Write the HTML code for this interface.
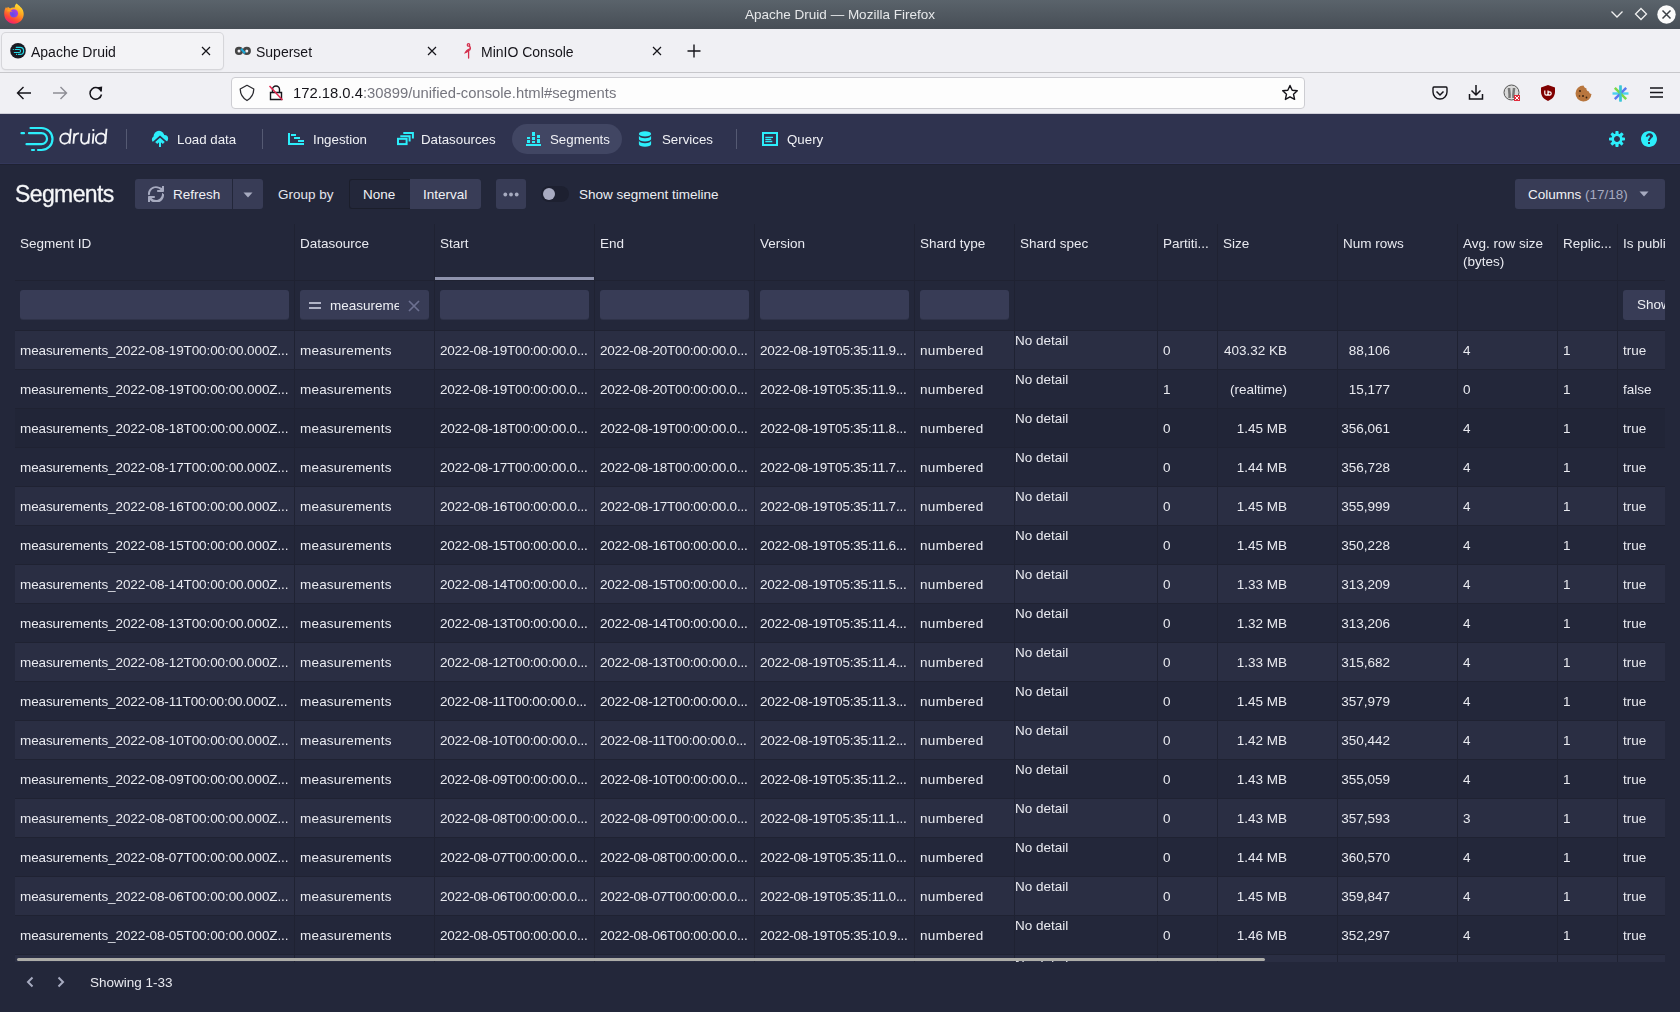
<!DOCTYPE html><html><head><meta charset="utf-8"><title>Apache Druid</title><style>
*{box-sizing:border-box;margin:0;padding:0}
html,body{width:1680px;height:1012px;overflow:hidden;background:#23273a;font-family:"Liberation Sans",sans-serif;-webkit-font-smoothing:antialiased}
.tbl,#dhdr,#tabbar,#navbar,#titlebar{will-change:transform}
.abs{position:absolute}
/* title bar */
#titlebar{position:absolute;left:0;top:0;width:1680px;height:29px;background:linear-gradient(#5a636b,#474e56);}
#titlebar .ttl{position:absolute;left:0;width:1680px;top:7px;text-align:center;color:#e6e8ea;font-size:13.5px;line-height:16px}
#tabbar{position:absolute;left:0;top:29px;width:1680px;height:44px;background:#f0f0f4;border-bottom:1px solid #c7c7cb}
.tab{position:absolute;top:4px;height:36px;width:221px;}
.tab.sel{background:#f3f3f6;border-radius:4px;box-shadow:0 0 0 1px #d6d6da,0 1px 2px rgba(0,0,0,.15)}
.tab .tt{position:absolute;left:29px;top:11px;font-size:14px;color:#15141a;line-height:17px}
.tab .tx{position:absolute;left:199px;top:13px}
.tab .fi{position:absolute;left:8px;top:11px}
#navbar{position:absolute;left:0;top:73px;width:1680px;height:41px;background:#f0f0f4;border-bottom:1px solid #cfcfd8}
#urlbar{position:absolute;left:231px;top:4px;width:1074px;height:32px;background:#fdfdfd;border:1px solid #cdcdd2;border-radius:4px}
#urlbar .u{position:absolute;left:61px;top:6px;font-size:14.8px;color:#15141a;line-height:18px;white-space:pre}
#urlbar .u i{font-style:normal;color:#75757e}
.ico{position:absolute}
/* druid header */
#dhdr{position:absolute;left:0;top:114px;width:1680px;height:50px;background:#2f334f;box-shadow:inset 0 -1px 0 #33375a,0 1px 0 #1f2233}
.nav{position:absolute;top:0;height:50px}
.navt{position:absolute;top:18px;font-size:13.3px;color:#f0f1f5;line-height:16px;white-space:pre}
.sep{position:absolute;top:15px;width:1px;height:20px;background:#555a73}
.pill{position:absolute;left:512px;top:10px;width:110px;height:30px;border-radius:15px;background:#414663}
/* toolbar */
.h1{position:absolute;left:15px;top:179px;font-size:23px;letter-spacing:-0.6px;-webkit-text-stroke:0.3px #f5f6f8;color:#f5f6f8;line-height:30px;white-space:pre;will-change:transform}
.btn{position:absolute;top:179px;height:30px;background:#383c56;border-radius:3px}
.btnt{position:absolute;top:8px;font-size:13.5px;color:#f0f1f5;line-height:16px;white-space:pre}
/* table */
.tbl{position:absolute;left:15px;top:224px;width:1650px;height:738px;overflow:hidden}
.hrow{position:absolute;left:0;top:0;width:1650px;height:57px;border-bottom:1px solid #1f2232}
.th{position:absolute;top:0;height:56px;border-right:1px solid #1f2232}
.th span{position:absolute;left:5px;top:11px;font-size:13.5px;color:#e9eaf0;line-height:18px;white-space:nowrap}
.th.sorted{box-shadow:inset 0 -3px 0 #8f93ad}
.frow{position:absolute;left:0;top:57px;width:1650px;height:50px;border-bottom:1px solid #1f2232}
.fc{position:absolute;top:0;height:50px;border-right:1px solid #1f2232}
.inp{position:absolute;left:5px;right:5px;top:9px;height:30px;background:#383c56;border-radius:3px;box-shadow:0 0 0 0 transparent, inset 0 -1px 0 rgba(0,0,0,.15)}
.dsf .eq{position:absolute;left:9px;top:12px;width:12px;height:7px;border-top:2px solid #b0b3c6;border-bottom:2px solid #b0b3c6}
.dsf .fv{position:absolute;left:30px;top:8px;width:69px;overflow:hidden;font-size:13.5px;color:#eceef3;line-height:16px;white-space:pre}
.dsf .fx{position:absolute;left:108px;top:8px}
.showbtn{position:absolute;left:5px;top:9px;width:60px;height:30px;background:#383c56;border-radius:3px;color:#eceef3;font-size:13.5px;line-height:30px;padding-left:14px}
.body{position:absolute;left:0;top:107px;width:1650px}
.row{position:absolute;left:0;width:1650px;height:39px;border-bottom:1px solid #1f2232}
.row.odd{background:#2a2e43}
.row.dark{background:#212537}
.td{position:absolute;top:0;height:39px;border-right:1px solid #1f2232;overflow:hidden}
.td span{position:absolute;left:5px;top:12px;font-size:13.5px;color:#e9eaf0;line-height:16px;white-space:nowrap}
.td.spec span{left:0px;top:2px}
.td.sz span{left:auto;right:50px}
.td.nr span{left:auto;right:67px}
.hscroll{position:absolute;left:2px;top:734px;width:1248px;height:3px;border-radius:1.5px;background:#adada8}
.foot{position:absolute;will-change:transform;top:975px;font-size:13.5px;color:#e9eaf0;line-height:16px}
.td.dt span{letter-spacing:-0.2px}
.td.sid span{letter-spacing:-0.1px}
.td.dsn span{letter-spacing:0.2px}
.td.shd span{letter-spacing:0.35px}

</style></head><body>
<div id="titlebar">
<svg class="ico" style="left:0;top:0" width="30" height="29" viewBox="0 0 30 29">
<defs><linearGradient id="ffg" x1="0.8" y1="0" x2="0.3" y2="1"><stop offset="0" stop-color="#ffe83a"/><stop offset="0.4" stop-color="#ffa51f"/><stop offset="0.75" stop-color="#ff4a35"/><stop offset="1" stop-color="#f0197a"/></linearGradient>
<radialGradient id="ffp" cx="0.35" cy="0.65" r="0.7"><stop offset="0" stop-color="#5b4fe8"/><stop offset="1" stop-color="#b03ae0"/></radialGradient></defs>
<path d="M16.4 3.6C15.2 5 14.6 6.4 14.8 7.6C13 7.2 11.2 7.6 10 8.4C9.4 7.6 8.6 7.2 7.6 7L7.2 8.6C6.6 8.2 6.2 7.6 6 7C4.8 8.8 4.2 11.2 4.2 13.8C4.2 19.4 8.6 23.8 14 23.8C19.4 23.8 23.7 19.4 23.7 14C23.7 9.8 21.2 7.6 20.4 7C19.6 5.8 17.8 4.8 16.4 3.6Z" fill="url(#ffg)"/>
<circle cx="13.9" cy="13.4" r="4.2" fill="url(#ffp)"/>
<path d="M6.8 11.6C8.2 11 10.8 11.2 12.6 11.8C11 10.4 9.4 9.8 7.6 10.2Z" fill="#ffa31f"/>
</svg>
<div class="ttl">Apache Druid — Mozilla Firefox</div>
<svg class="ico" style="left:1610px;top:9px" width="14" height="10" viewBox="0 0 14 10"><path d="M1.5 2.5L7 8L12.5 2.5" fill="none" stroke="#f0f0f0" stroke-width="1.3"/></svg>
<svg class="ico" style="left:1634px;top:7px" width="14" height="14" viewBox="0 0 14 14"><path d="M7 1.5L12.5 7L7 12.5L1.5 7Z" fill="none" stroke="#f0f0f0" stroke-width="1.3"/></svg>
<svg class="ico" style="left:1656px;top:4px" width="21" height="21" viewBox="0 0 21 21"><circle cx="10.5" cy="10.5" r="9.2" fill="#fbfbfb"/><path d="M6.5 6.5L14.5 14.5M14.5 6.5L6.5 14.5" stroke="#3a3f45" stroke-width="1.5"/></svg>
</div>
<div id="tabbar">
<div class="tab sel" style="left:2px">
<svg class="fi" style="left:0;top:0" width="30" height="36" viewBox="2 33 30 36"><circle cx="18" cy="50.8" r="7.8" fill="#1b1a22"/><g fill="none" stroke="#27d8e6" stroke-width="1.15" stroke-linecap="round"><path d="M16.3 47.4H20.1A3.5 3.5 0 0 1 20.1 54.4H18.4M16.5 54.4H16.6"/><path d="M15.3 49.5H19.1A1.5 1.5 0 0 1 19.1 52.5H14.3M13.3 49.5H13.4"/></g></svg>
<div class="tt">Apache Druid</div>
<svg class="tx" width="10" height="10" viewBox="0 0 10 10"><path d="M1 1L9 9M9 1L1 9" stroke="#15141a" stroke-width="1.2"/></svg>
</div>
<div class="tab" style="left:225px">
<svg class="fi" style="left:0;top:0" width="30" height="36" viewBox="225 33 30 36"><circle cx="239" cy="50.9" r="2.8" fill="none" stroke="#454545" stroke-width="2.6"/><circle cx="246.8" cy="50.9" r="2.8" fill="none" stroke="#454545" stroke-width="2.6"/><path d="M241 48.6L245 53.2" stroke="#1aa6d6" stroke-width="2.2"/></svg>
<div class="tt" style="left:31px">Superset</div>
<svg class="tx" style="left:202px" width="10" height="10" viewBox="0 0 10 10"><path d="M1 1L9 9M9 1L1 9" stroke="#15141a" stroke-width="1.2"/></svg>
</div>
<div class="tab" style="left:450px">
<svg class="fi" style="left:0;top:0" width="30" height="36" viewBox="450 33 30 36"><g fill="none" stroke="#d3304d" stroke-width="1.3" stroke-linecap="round"><circle cx="468.5" cy="44.9" r="1.2"/><path d="M469.4 46Q471.2 48 469.8 50M468.6 50.5V58"/></g><path d="M464 53.8Q465.5 49.6 470 48.2Q470.6 51.5 464 53.8Z" fill="#d3304d"/></svg>
<div class="tt" style="left:31px">MinIO Console</div>
<svg class="tx" style="left:202px" width="10" height="10" viewBox="0 0 10 10"><path d="M1 1L9 9M9 1L1 9" stroke="#15141a" stroke-width="1.2"/></svg>
</div>
<svg class="ico" style="left:687px;top:15px" width="14" height="14" viewBox="0 0 14 14"><path d="M7 0.5V13.5M0.5 7H13.5" stroke="#15141a" stroke-width="1.4"/></svg>
</div>
<div id="navbar">
<svg class="ico" style="left:16px;top:13px" width="16" height="14" viewBox="0 0 16 14"><path d="M15 7H1.5M7.5 1L1.5 7L7.5 13" fill="none" stroke="#15141a" stroke-width="1.4"/></svg>
<svg class="ico" style="left:52px;top:13px" width="16" height="14" viewBox="0 0 16 14"><path d="M1 7H14.5M8.5 1L14.5 7L8.5 13" fill="none" stroke="#8d8d94" stroke-width="1.4"/></svg>
<svg class="ico" style="left:88px;top:12px" width="16" height="16" viewBox="0 0 16 16"><path d="M13.3 6.5A5.8 5.8 0 1 0 13.5 9.5" fill="none" stroke="#15141a" stroke-width="1.5"/><path d="M9.5 2.2L14.2 1.6L13.8 6.4Z" fill="#15141a"/></svg>
<div id="urlbar">
<svg class="ico" style="left:5px;top:5px" width="20" height="20" viewBox="0 0 20 20"><path d="M10 2.3L3.2 6C3.4 11.5 5.5 15 10 17.5C14.5 15 16.6 11.5 16.8 6Z" fill="none" stroke="#2b2b30" stroke-width="1.3" stroke-linejoin="round"/></svg>
<svg class="ico" style="left:36px;top:6px" width="16" height="17" viewBox="0 0 16 17"><path d="M4.5 8V5.5A3.5 3.5 0 0 1 11.5 5.5V8M2.5 8.5H13.5V15.5H2.5Z" fill="none" stroke="#15141a" stroke-width="1.4"/><path d="M1.5 2L14.5 16" stroke="#e22850" stroke-width="1.5"/></svg>
<div class="u">172.18.0.4<i>:30899/unified-console.html#segments</i></div>
<svg class="ico" style="left:1049px;top:6px" width="18" height="18" viewBox="0 0 18 18"><path d="M9 1.5L11.2 6.3L16.3 6.8L12.5 10.2L13.6 15.4L9 12.8L4.4 15.4L5.5 10.2L1.7 6.8L6.8 6.3Z" fill="none" stroke="#15141a" stroke-width="1.4" stroke-linejoin="round"/></svg>
</div>
<svg class="ico" style="left:1432px;top:13px" width="16" height="14" viewBox="0 0 16 14"><path d="M2 1H14A1.2 1.2 0 0 1 15 2.2V6A7 7 0 0 1 1 6V2.2A1.2 1.2 0 0 1 2 1Z" fill="none" stroke="#15141a" stroke-width="1.4"/><path d="M4.5 5.5L8 9L11.5 5.5" fill="none" stroke="#15141a" stroke-width="1.5"/></svg>
<svg class="ico" style="left:1468px;top:11px" width="16" height="17" viewBox="0 0 16 17"><path d="M8 1V11M3.5 6.5L8 11L12.5 6.5M1.5 10V15H14.5V10" fill="none" stroke="#15141a" stroke-width="1.5"/></svg>
<svg class="ico" style="left:1503px;top:11px" width="18" height="18" viewBox="0 0 18 18"><circle cx="8.5" cy="8.5" r="7.5" fill="#d8d8d8" stroke="#555" stroke-width="1"/><path d="M6 4C6 7 7 9 6.5 14M11 4C11 7 10 9 10.5 14" stroke="#777" stroke-width="2.5"/><rect x="11" y="11" width="6" height="6" fill="#e02a3a"/><path d="M12 12L16 16M16 12L12 16" stroke="#fff" stroke-width="1"/></svg>
<svg class="ico" style="left:1540px;top:11px" width="16" height="18" viewBox="0 0 16 18"><path d="M8 1L15 3.5V8C15 12.5 11.5 15.5 8 17C4.5 15.5 1 12.5 1 8V3.5Z" fill="#800000"/><path d="M4.8 6.5V9.5A1.6 1.6 0 0 0 8 9.5V6.5M8 9.5A1.6 1.6 0 0 0 11.2 9.5A1.6 1.6 0 0 0 8 9.5" fill="none" stroke="#fff" stroke-width="1.2"/></svg>
<svg class="ico" style="left:1575px;top:12px" width="17" height="17" viewBox="0 0 17 17"><path d="M8.5 0.5A8 8 0 1 0 16.5 9C15 9 14 8 14 6.5C12.5 6.5 11 5 11.5 3.5C10 3 9 2 8.5 0.5Z" fill="#b8763e"/><circle cx="5" cy="6" r="1" fill="#3b2412"/><circle cx="8" cy="11" r="1" fill="#3b2412"/><circle cx="11.5" cy="12.5" r="0.9" fill="#3b2412"/><circle cx="4.5" cy="11" r="0.8" fill="#3b2412"/></svg>
<svg class="ico" style="left:1612px;top:12px" width="17" height="17" viewBox="0 0 17 17"><path d="M8.5 0.5V16.5" stroke="#33c8e8" stroke-width="2.4"/><path d="M0.5 8.5H16.5" stroke="#4ad0f0" stroke-width="2.4"/><path d="M14.2 2.8L2.8 14.2" stroke="#5a78f0" stroke-width="2.4"/><path d="M2.8 2.8L14.2 14.2" stroke="#7ad84a" stroke-width="2.4"/><path d="M8.5 0.5V16.5" stroke="#3cc6d2" stroke-width="2.2"/></svg>
<svg class="ico" style="left:1650px;top:14px" width="13" height="11" viewBox="0 0 13 11"><path d="M0 1H13M0 5.5H13M0 10H13" stroke="#15141a" stroke-width="1.4"/></svg>
</div>

<div id="dhdr">
<svg class="ico" style="left:14px;top:6px" width="100" height="38" viewBox="14 120 100 38">
<g fill="none" stroke="#2ceefb" stroke-width="2.2" stroke-linecap="round">
<path d="M30.5 128H41.5A11 11 0 0 1 41.5 150H38"/><path d="M32 150H34"/>
<path d="M29 133.2H41.5A5.5 5.5 0 0 1 41.5 144.2H26.5"/><path d="M21.5 133.2H24"/>
</g>
<g fill="none" stroke="#f2f3f6" stroke-width="1.85" transform="translate(0,143.8) skewX(-5) translate(0,-143.8)">
<ellipse cx="64.6" cy="138.6" rx="4.8" ry="5.1"/><path d="M69.5 128.8V143.8"/>
<path d="M73.4 133.3V143.8M73.4 137.8Q74 133.4 78.2 133.4"/>
<path d="M80.7 133.3V139.3A3.85 4.4 0 0 0 88.4 139.3V133.3M88.4 139V143.8"/>
<path d="M92.7 133.3V143.8"/>
<ellipse cx="100.2" cy="138.6" rx="4.8" ry="5.1"/><path d="M105.2 128.8V143.8"/>
</g>
<circle cx="93.3" cy="130.1" r="1.15" fill="#f2f3f6"/>
</svg>
<div class="sep" style="left:126px"></div>
<svg class="ico" style="left:148px;top:14px" width="24" height="22" viewBox="148 128 24 22"><defs><clipPath id="cuc"><rect x="148" y="128" width="24" height="14.3"/></clipPath></defs><g clip-path="url(#cuc)" fill="#2ceefb"><circle cx="159" cy="136.2" r="5.4"/><circle cx="164.6" cy="138.6" r="3.5"/><circle cx="155" cy="139.6" r="3.1"/><rect x="155" y="137" width="10" height="6"/></g><path d="M151.5 144.2L160 136.6L168.5 144.2" fill="none" stroke="#2f334f" stroke-width="1.8"/><path d="M155.8 142.6L160 138.4L164.2 142.6L162.8 144L161 142.3V147H159V142.3L157.2 144Z" fill="#2ceefb"/></svg>
<div class="navt" style="left:177px">Load data</div>
<div class="sep" style="left:262px"></div>
<svg class="ico" style="left:282px;top:14px" width="28" height="22" viewBox="282 128 28 22" fill="#2ceefb"><rect x="288" y="133" width="2" height="12"/><rect x="288" y="143" width="16" height="2"/><rect x="291" y="134" width="5" height="2"/><rect x="294" y="137" width="6" height="2"/><rect x="298" y="140" width="6" height="2"/></svg>
<div class="navt" style="left:313px">Ingestion</div>
<svg class="ico" style="left:390px;top:12px" width="30" height="26" viewBox="390 126 30 26"><g fill="none" stroke="#2ceefb" stroke-width="2"><rect x="398" y="138.8" width="8.6" height="5.3"/><path d="M400.3 136.2H409.6V141.6M403.3 133.1H412.9V138.6"/></g></svg>
<div class="navt" style="left:421px">Datasources</div>
<div class="pill"></div>
<svg class="ico" style="left:522px;top:14px" width="24" height="22" viewBox="522 128 24 22" fill="#2ceefb"><rect x="526" y="144" width="15" height="2"/><rect x="527" y="137" width="3" height="2"/><rect x="527" y="140" width="3" height="3"/><rect x="532" y="132" width="3" height="4"/><rect x="532" y="137" width="3" height="3"/><rect x="532" y="141" width="3" height="2"/><rect x="537" y="135" width="3" height="3"/><rect x="537" y="139" width="3" height="4"/></svg>
<div class="navt" style="left:550px">Segments</div>
<svg class="ico" style="left:638px;top:17px" width="14" height="16" viewBox="0 0 14 16"><ellipse cx="7" cy="2.9" rx="6.1" ry="2.6" fill="#2ceefb"/><path d="M0.9 4.6A6.1 2.6 0 0 0 13.1 4.6V8A6.1 2.6 0 0 1 0.9 8Z" fill="#2ceefb"/><path d="M0.9 9.6A6.1 2.6 0 0 0 13.1 9.6V13.2A6.1 2.6 0 0 1 0.9 13.2Z" fill="#2ceefb"/></svg>
<div class="navt" style="left:662px">Services</div>
<div class="sep" style="left:736px"></div>
<svg class="ico" style="left:762px;top:18px" width="16" height="14" viewBox="0 0 16 14"><rect x="1" y="1" width="14" height="12" fill="none" stroke="#2ceefb" stroke-width="2"/><path d="M3.3 5.3H11M3.3 7.4H9.3M3.3 9.5H10.3" stroke="#2ceefb" stroke-width="1.3"/></svg>
<div class="navt" style="left:787px">Query</div>
<svg class="ico" style="left:1609px;top:17px" width="16" height="16" viewBox="0 0 16 16"><path d="M15.19 6.39h-1.85c-.11-.37-.27-.71-.45-1.04l1.36-1.36c.31-.31.31-.82 0-1.13l-1.13-1.13a.803.803 0 00-1.13 0l-1.36 1.36c-.33-.17-.67-.33-1.04-.44V.79c0-.44-.36-.8-.8-.8h-1.6c-.44 0-.8.36-.8.8v1.86c-.39.12-.75.28-1.1.47l-1.3-1.3c-.3-.3-.79-.3-1.09 0L1.82 2.91c-.3.3-.3.79 0 1.09l1.3 1.3c-.2.34-.36.7-.48 1.09H.79c-.44 0-.8.36-.8.8v1.6c0 .44.36.8.8.8h1.85c.11.37.27.71.45 1.04l-1.36 1.36c-.31.31-.31.82 0 1.13l1.13 1.13c.31.31.82.31 1.13 0l1.36-1.36c.33.18.67.33 1.04.44v1.86c0 .44.36.8.8.8h1.6c.44 0 .8-.36.8-.8v-1.86c.39-.12.75-.28 1.1-.47l1.3 1.3c.3.3.79.3 1.09 0l1.09-1.09c.3-.3.3-.79 0-1.09l-1.3-1.3c.19-.35.36-.71.48-1.1h1.85c.44 0 .8-.36.8-.8v-1.6a.816.816 0 00-.81-.79zm-7.2 4.6c-1.66 0-3-1.34-3-3s1.34-3 3-3 3 1.34 3 3-1.34 3-3 3z" fill="#2ceefb"/></svg>
<svg class="ico" style="left:1641px;top:17px" width="16" height="16" viewBox="0 0 16 16"><path d="M8 0C3.58 0 0 3.58 0 8s3.58 8 8 8 8-3.58 8-8-3.58-8-8-8zm1 13H7v-2h2v2zm1.93-6.52c-.14.32-.35.64-.62.97L9.25 8.83c-.12.15-.24.29-.28.42-.04.13-.09.3-.09.52V10H7.12V8.88s.05-.51.21-.71L8.4 6.73c.22-.26.35-.49.44-.68.09-.19.12-.38.12-.58 0-.3-.1-.55-.28-.75-.18-.19-.44-.28-.76-.28-.33 0-.59.1-.78.29-.19.19-.33.46-.4.8-.03.1-.09.14-.2.14H4.97c-.11 0-.13-.08-.12-.18.08-.53.23-.99.45-1.38s.5-.72.84-.98c.34-.26.72-.45 1.15-.58.43-.13.89-.19 1.38-.19.5 0 .95.07 1.36.2.41.14.76.33 1.04.59.29.25.51.56.67.92.16.36.23.76.23 1.21 0 .35-.07.65-.18.97z" fill="#2ceefb"/></svg>
</div>
<div class="h1">Segments</div>
<div class="btn" style="left:135px;width:128px">
<svg class="ico" style="left:13px;top:7px" width="16" height="16" viewBox="0 0 16 16"><path d="M14.99 6.99c-.55 0-1 .45-1 1 0 3.31-2.69 6-6 6-1.77 0-3.36-.78-4.46-2h2.46c.55 0 1-.45 1-1s-.45-1-1-1h-4.98c-.55 0-1 .45-1 1v5c0 .55.45 1 1 1s1-.45 1-1v-2.1c1.46 1.73 3.63 2.85 6.07 2.85 4.4 0 7.97-3.56 7.97-7.95-.01-.55-.46-1-1.01-1zM1.01 8.99c.55 0 1-.45 1-1 0-3.31 2.69-6 6-6 1.77 0 3.36.78 4.46 2h-2.46c-.55 0-1 .45-1 1s.45 1 1 1h4.98c.55 0 1-.45 1-1v-5c0-.55-.45-1-1-1s-1 .45-1 1v2.1C12.53 1.35 10.36.23 7.93.23 3.52.23-.05 3.79-.05 8.18c.01.55.46 1 1.01 1z" fill="#a7abc0"/></svg>
<div class="btnt" style="left:38px">Refresh</div>
<div style="position:absolute;left:97px;top:0;width:1px;height:30px;background:#23273a"></div>
<svg class="ico" style="left:108px;top:13px" width="10" height="6" viewBox="0 0 10 6"><path d="M0.5 0.5H9.5L5 5.5Z" fill="#a7abc0"/></svg>
</div>
<div class="btnt" style="left:278px;top:187px;color:#e4e6ee">Group by</div>
<div class="btn" style="left:349px;width:132px;background:#23273a;box-shadow:inset 0 0 0 1px #1b1e2b">
<div style="position:absolute;left:61px;top:0;width:71px;height:30px;background:#393d57;border-radius:0 3px 3px 0"></div>
<div class="btnt" style="left:14px">None</div>
<div class="btnt" style="left:74px">Interval</div>
</div>
<div class="btn" style="left:496px;width:30px">
<svg class="ico" style="left:7px;top:13px" width="16" height="5" viewBox="0 0 16 5"><circle cx="2.3" cy="2.5" r="1.9" fill="#a7abc0"/><circle cx="8" cy="2.5" r="1.9" fill="#a7abc0"/><circle cx="13.7" cy="2.5" r="1.9" fill="#a7abc0"/></svg>
</div>
<div class="abs" style="left:541px;top:186px;width:28px;height:16px;border-radius:8px;background:#1d2030"></div>
<div class="abs" style="left:543px;top:188px;width:12px;height:12px;border-radius:6px;background:#a8abc1"></div>
<div class="btnt" style="left:579px;top:187px;color:#eceef3">Show segment timeline</div>
<div class="btn" style="left:1515px;width:150px">
<div class="btnt" style="left:13px">Columns <span style="color:#a7abc0">(17/18)</span></div>
<svg class="ico" style="left:124px;top:12px" width="10" height="6" viewBox="0 0 10 6"><path d="M0.5 0.5H9.5L5 5.5Z" fill="#a7abc0"/></svg>
</div>

<div class="tbl"><div class="hrow"><div class="th" style="left:0px;width:280px"><span>Segment ID</span></div><div class="th" style="left:280px;width:140px"><span>Datasource</span></div><div class="th sorted" style="left:420px;width:160px"><span>Start</span></div><div class="th" style="left:580px;width:160px"><span>End</span></div><div class="th" style="left:740px;width:160px"><span>Version</span></div><div class="th" style="left:900px;width:100px"><span>Shard type</span></div><div class="th" style="left:1000px;width:143px"><span>Shard spec</span></div><div class="th" style="left:1143px;width:60px"><span>Partiti...</span></div><div class="th" style="left:1203px;width:120px"><span>Size</span></div><div class="th" style="left:1323px;width:120px"><span>Num rows</span></div><div class="th" style="left:1443px;width:100px"><span>Avg. row size<br>(bytes)</span></div><div class="th" style="left:1543px;width:60px"><span>Replic...</span></div><div class="th" style="left:1603px;width:102px"><span>Is publi</span></div></div><div class="frow"><div class="fc" style="left:0px;width:280px"><div class="inp"></div></div><div class="fc" style="left:280px;width:140px"><div class="inp dsf"><span class="eq"></span><span class="fv">measureme</span><span class="fx"><svg width="12" height="12" viewBox="0 0 12 12"><path d="M1 1L11 11M11 1L1 11" stroke="#6c7090" stroke-width="1.7"/></svg></span></div></div><div class="fc" style="left:420px;width:160px"><div class="inp"></div></div><div class="fc" style="left:580px;width:160px"><div class="inp"></div></div><div class="fc" style="left:740px;width:160px"><div class="inp"></div></div><div class="fc" style="left:900px;width:100px"><div class="inp"></div></div><div class="fc" style="left:1000px;width:143px"></div><div class="fc" style="left:1143px;width:60px"></div><div class="fc" style="left:1203px;width:120px"></div><div class="fc" style="left:1323px;width:120px"></div><div class="fc" style="left:1443px;width:100px"></div><div class="fc" style="left:1543px;width:60px"></div><div class="fc" style="left:1603px;width:102px"><div class="showbtn">Show</div></div></div><div class="body"><div class="row odd" style="top:0px"><div class="td sid" style="left:0px;width:280px"><span>measurements_2022-08-19T00:00:00.000Z...</span></div><div class="td dsn" style="left:280px;width:140px"><span>measurements</span></div><div class="td dt" style="left:420px;width:160px"><span>2022-08-19T00:00:00.0...</span></div><div class="td dt" style="left:580px;width:160px"><span>2022-08-20T00:00:00.0...</span></div><div class="td dt" style="left:740px;width:160px"><span>2022-08-19T05:35:11.9...</span></div><div class="td shd" style="left:900px;width:100px"><span>numbered</span></div><div class="td spec" style="left:1000px;width:143px"><span>No detail</span></div><div class="td" style="left:1143px;width:60px"><span>0</span></div><div class="td sz" style="left:1203px;width:120px"><span>403.32 KB</span></div><div class="td nr" style="left:1323px;width:120px"><span>88,106</span></div><div class="td" style="left:1443px;width:100px"><span>4</span></div><div class="td" style="left:1543px;width:60px"><span>1</span></div><div class="td" style="left:1603px;width:102px"><span>true</span></div></div><div class="row" style="top:39px"><div class="td sid" style="left:0px;width:280px"><span>measurements_2022-08-19T00:00:00.000Z...</span></div><div class="td dsn" style="left:280px;width:140px"><span>measurements</span></div><div class="td dt" style="left:420px;width:160px"><span>2022-08-19T00:00:00.0...</span></div><div class="td dt" style="left:580px;width:160px"><span>2022-08-20T00:00:00.0...</span></div><div class="td dt" style="left:740px;width:160px"><span>2022-08-19T05:35:11.9...</span></div><div class="td shd" style="left:900px;width:100px"><span>numbered</span></div><div class="td spec" style="left:1000px;width:143px"><span>No detail</span></div><div class="td" style="left:1143px;width:60px"><span>1</span></div><div class="td sz" style="left:1203px;width:120px"><span>(realtime)</span></div><div class="td nr" style="left:1323px;width:120px"><span>15,177</span></div><div class="td" style="left:1443px;width:100px"><span>0</span></div><div class="td" style="left:1543px;width:60px"><span>1</span></div><div class="td" style="left:1603px;width:102px"><span>false</span></div></div><div class="row dark" style="top:78px"><div class="td sid" style="left:0px;width:280px"><span>measurements_2022-08-18T00:00:00.000Z...</span></div><div class="td dsn" style="left:280px;width:140px"><span>measurements</span></div><div class="td dt" style="left:420px;width:160px"><span>2022-08-18T00:00:00.0...</span></div><div class="td dt" style="left:580px;width:160px"><span>2022-08-19T00:00:00.0...</span></div><div class="td dt" style="left:740px;width:160px"><span>2022-08-19T05:35:11.8...</span></div><div class="td shd" style="left:900px;width:100px"><span>numbered</span></div><div class="td spec" style="left:1000px;width:143px"><span>No detail</span></div><div class="td" style="left:1143px;width:60px"><span>0</span></div><div class="td sz" style="left:1203px;width:120px"><span>1.45 MB</span></div><div class="td nr" style="left:1323px;width:120px"><span>356,061</span></div><div class="td" style="left:1443px;width:100px"><span>4</span></div><div class="td" style="left:1543px;width:60px"><span>1</span></div><div class="td" style="left:1603px;width:102px"><span>true</span></div></div><div class="row" style="top:117px"><div class="td sid" style="left:0px;width:280px"><span>measurements_2022-08-17T00:00:00.000Z...</span></div><div class="td dsn" style="left:280px;width:140px"><span>measurements</span></div><div class="td dt" style="left:420px;width:160px"><span>2022-08-17T00:00:00.0...</span></div><div class="td dt" style="left:580px;width:160px"><span>2022-08-18T00:00:00.0...</span></div><div class="td dt" style="left:740px;width:160px"><span>2022-08-19T05:35:11.7...</span></div><div class="td shd" style="left:900px;width:100px"><span>numbered</span></div><div class="td spec" style="left:1000px;width:143px"><span>No detail</span></div><div class="td" style="left:1143px;width:60px"><span>0</span></div><div class="td sz" style="left:1203px;width:120px"><span>1.44 MB</span></div><div class="td nr" style="left:1323px;width:120px"><span>356,728</span></div><div class="td" style="left:1443px;width:100px"><span>4</span></div><div class="td" style="left:1543px;width:60px"><span>1</span></div><div class="td" style="left:1603px;width:102px"><span>true</span></div></div><div class="row odd" style="top:156px"><div class="td sid" style="left:0px;width:280px"><span>measurements_2022-08-16T00:00:00.000Z...</span></div><div class="td dsn" style="left:280px;width:140px"><span>measurements</span></div><div class="td dt" style="left:420px;width:160px"><span>2022-08-16T00:00:00.0...</span></div><div class="td dt" style="left:580px;width:160px"><span>2022-08-17T00:00:00.0...</span></div><div class="td dt" style="left:740px;width:160px"><span>2022-08-19T05:35:11.7...</span></div><div class="td shd" style="left:900px;width:100px"><span>numbered</span></div><div class="td spec" style="left:1000px;width:143px"><span>No detail</span></div><div class="td" style="left:1143px;width:60px"><span>0</span></div><div class="td sz" style="left:1203px;width:120px"><span>1.45 MB</span></div><div class="td nr" style="left:1323px;width:120px"><span>355,999</span></div><div class="td" style="left:1443px;width:100px"><span>4</span></div><div class="td" style="left:1543px;width:60px"><span>1</span></div><div class="td" style="left:1603px;width:102px"><span>true</span></div></div><div class="row" style="top:195px"><div class="td sid" style="left:0px;width:280px"><span>measurements_2022-08-15T00:00:00.000Z...</span></div><div class="td dsn" style="left:280px;width:140px"><span>measurements</span></div><div class="td dt" style="left:420px;width:160px"><span>2022-08-15T00:00:00.0...</span></div><div class="td dt" style="left:580px;width:160px"><span>2022-08-16T00:00:00.0...</span></div><div class="td dt" style="left:740px;width:160px"><span>2022-08-19T05:35:11.6...</span></div><div class="td shd" style="left:900px;width:100px"><span>numbered</span></div><div class="td spec" style="left:1000px;width:143px"><span>No detail</span></div><div class="td" style="left:1143px;width:60px"><span>0</span></div><div class="td sz" style="left:1203px;width:120px"><span>1.45 MB</span></div><div class="td nr" style="left:1323px;width:120px"><span>350,228</span></div><div class="td" style="left:1443px;width:100px"><span>4</span></div><div class="td" style="left:1543px;width:60px"><span>1</span></div><div class="td" style="left:1603px;width:102px"><span>true</span></div></div><div class="row odd" style="top:234px"><div class="td sid" style="left:0px;width:280px"><span>measurements_2022-08-14T00:00:00.000Z...</span></div><div class="td dsn" style="left:280px;width:140px"><span>measurements</span></div><div class="td dt" style="left:420px;width:160px"><span>2022-08-14T00:00:00.0...</span></div><div class="td dt" style="left:580px;width:160px"><span>2022-08-15T00:00:00.0...</span></div><div class="td dt" style="left:740px;width:160px"><span>2022-08-19T05:35:11.5...</span></div><div class="td shd" style="left:900px;width:100px"><span>numbered</span></div><div class="td spec" style="left:1000px;width:143px"><span>No detail</span></div><div class="td" style="left:1143px;width:60px"><span>0</span></div><div class="td sz" style="left:1203px;width:120px"><span>1.33 MB</span></div><div class="td nr" style="left:1323px;width:120px"><span>313,209</span></div><div class="td" style="left:1443px;width:100px"><span>4</span></div><div class="td" style="left:1543px;width:60px"><span>1</span></div><div class="td" style="left:1603px;width:102px"><span>true</span></div></div><div class="row" style="top:273px"><div class="td sid" style="left:0px;width:280px"><span>measurements_2022-08-13T00:00:00.000Z...</span></div><div class="td dsn" style="left:280px;width:140px"><span>measurements</span></div><div class="td dt" style="left:420px;width:160px"><span>2022-08-13T00:00:00.0...</span></div><div class="td dt" style="left:580px;width:160px"><span>2022-08-14T00:00:00.0...</span></div><div class="td dt" style="left:740px;width:160px"><span>2022-08-19T05:35:11.4...</span></div><div class="td shd" style="left:900px;width:100px"><span>numbered</span></div><div class="td spec" style="left:1000px;width:143px"><span>No detail</span></div><div class="td" style="left:1143px;width:60px"><span>0</span></div><div class="td sz" style="left:1203px;width:120px"><span>1.32 MB</span></div><div class="td nr" style="left:1323px;width:120px"><span>313,206</span></div><div class="td" style="left:1443px;width:100px"><span>4</span></div><div class="td" style="left:1543px;width:60px"><span>1</span></div><div class="td" style="left:1603px;width:102px"><span>true</span></div></div><div class="row odd" style="top:312px"><div class="td sid" style="left:0px;width:280px"><span>measurements_2022-08-12T00:00:00.000Z...</span></div><div class="td dsn" style="left:280px;width:140px"><span>measurements</span></div><div class="td dt" style="left:420px;width:160px"><span>2022-08-12T00:00:00.0...</span></div><div class="td dt" style="left:580px;width:160px"><span>2022-08-13T00:00:00.0...</span></div><div class="td dt" style="left:740px;width:160px"><span>2022-08-19T05:35:11.4...</span></div><div class="td shd" style="left:900px;width:100px"><span>numbered</span></div><div class="td spec" style="left:1000px;width:143px"><span>No detail</span></div><div class="td" style="left:1143px;width:60px"><span>0</span></div><div class="td sz" style="left:1203px;width:120px"><span>1.33 MB</span></div><div class="td nr" style="left:1323px;width:120px"><span>315,682</span></div><div class="td" style="left:1443px;width:100px"><span>4</span></div><div class="td" style="left:1543px;width:60px"><span>1</span></div><div class="td" style="left:1603px;width:102px"><span>true</span></div></div><div class="row" style="top:351px"><div class="td sid" style="left:0px;width:280px"><span>measurements_2022-08-11T00:00:00.000Z...</span></div><div class="td dsn" style="left:280px;width:140px"><span>measurements</span></div><div class="td dt" style="left:420px;width:160px"><span>2022-08-11T00:00:00.0...</span></div><div class="td dt" style="left:580px;width:160px"><span>2022-08-12T00:00:00.0...</span></div><div class="td dt" style="left:740px;width:160px"><span>2022-08-19T05:35:11.3...</span></div><div class="td shd" style="left:900px;width:100px"><span>numbered</span></div><div class="td spec" style="left:1000px;width:143px"><span>No detail</span></div><div class="td" style="left:1143px;width:60px"><span>0</span></div><div class="td sz" style="left:1203px;width:120px"><span>1.45 MB</span></div><div class="td nr" style="left:1323px;width:120px"><span>357,979</span></div><div class="td" style="left:1443px;width:100px"><span>4</span></div><div class="td" style="left:1543px;width:60px"><span>1</span></div><div class="td" style="left:1603px;width:102px"><span>true</span></div></div><div class="row odd" style="top:390px"><div class="td sid" style="left:0px;width:280px"><span>measurements_2022-08-10T00:00:00.000Z...</span></div><div class="td dsn" style="left:280px;width:140px"><span>measurements</span></div><div class="td dt" style="left:420px;width:160px"><span>2022-08-10T00:00:00.0...</span></div><div class="td dt" style="left:580px;width:160px"><span>2022-08-11T00:00:00.0...</span></div><div class="td dt" style="left:740px;width:160px"><span>2022-08-19T05:35:11.2...</span></div><div class="td shd" style="left:900px;width:100px"><span>numbered</span></div><div class="td spec" style="left:1000px;width:143px"><span>No detail</span></div><div class="td" style="left:1143px;width:60px"><span>0</span></div><div class="td sz" style="left:1203px;width:120px"><span>1.42 MB</span></div><div class="td nr" style="left:1323px;width:120px"><span>350,442</span></div><div class="td" style="left:1443px;width:100px"><span>4</span></div><div class="td" style="left:1543px;width:60px"><span>1</span></div><div class="td" style="left:1603px;width:102px"><span>true</span></div></div><div class="row" style="top:429px"><div class="td sid" style="left:0px;width:280px"><span>measurements_2022-08-09T00:00:00.000Z...</span></div><div class="td dsn" style="left:280px;width:140px"><span>measurements</span></div><div class="td dt" style="left:420px;width:160px"><span>2022-08-09T00:00:00.0...</span></div><div class="td dt" style="left:580px;width:160px"><span>2022-08-10T00:00:00.0...</span></div><div class="td dt" style="left:740px;width:160px"><span>2022-08-19T05:35:11.2...</span></div><div class="td shd" style="left:900px;width:100px"><span>numbered</span></div><div class="td spec" style="left:1000px;width:143px"><span>No detail</span></div><div class="td" style="left:1143px;width:60px"><span>0</span></div><div class="td sz" style="left:1203px;width:120px"><span>1.43 MB</span></div><div class="td nr" style="left:1323px;width:120px"><span>355,059</span></div><div class="td" style="left:1443px;width:100px"><span>4</span></div><div class="td" style="left:1543px;width:60px"><span>1</span></div><div class="td" style="left:1603px;width:102px"><span>true</span></div></div><div class="row odd" style="top:468px"><div class="td sid" style="left:0px;width:280px"><span>measurements_2022-08-08T00:00:00.000Z...</span></div><div class="td dsn" style="left:280px;width:140px"><span>measurements</span></div><div class="td dt" style="left:420px;width:160px"><span>2022-08-08T00:00:00.0...</span></div><div class="td dt" style="left:580px;width:160px"><span>2022-08-09T00:00:00.0...</span></div><div class="td dt" style="left:740px;width:160px"><span>2022-08-19T05:35:11.1...</span></div><div class="td shd" style="left:900px;width:100px"><span>numbered</span></div><div class="td spec" style="left:1000px;width:143px"><span>No detail</span></div><div class="td" style="left:1143px;width:60px"><span>0</span></div><div class="td sz" style="left:1203px;width:120px"><span>1.43 MB</span></div><div class="td nr" style="left:1323px;width:120px"><span>357,593</span></div><div class="td" style="left:1443px;width:100px"><span>3</span></div><div class="td" style="left:1543px;width:60px"><span>1</span></div><div class="td" style="left:1603px;width:102px"><span>true</span></div></div><div class="row" style="top:507px"><div class="td sid" style="left:0px;width:280px"><span>measurements_2022-08-07T00:00:00.000Z...</span></div><div class="td dsn" style="left:280px;width:140px"><span>measurements</span></div><div class="td dt" style="left:420px;width:160px"><span>2022-08-07T00:00:00.0...</span></div><div class="td dt" style="left:580px;width:160px"><span>2022-08-08T00:00:00.0...</span></div><div class="td dt" style="left:740px;width:160px"><span>2022-08-19T05:35:11.0...</span></div><div class="td shd" style="left:900px;width:100px"><span>numbered</span></div><div class="td spec" style="left:1000px;width:143px"><span>No detail</span></div><div class="td" style="left:1143px;width:60px"><span>0</span></div><div class="td sz" style="left:1203px;width:120px"><span>1.44 MB</span></div><div class="td nr" style="left:1323px;width:120px"><span>360,570</span></div><div class="td" style="left:1443px;width:100px"><span>4</span></div><div class="td" style="left:1543px;width:60px"><span>1</span></div><div class="td" style="left:1603px;width:102px"><span>true</span></div></div><div class="row odd" style="top:546px"><div class="td sid" style="left:0px;width:280px"><span>measurements_2022-08-06T00:00:00.000Z...</span></div><div class="td dsn" style="left:280px;width:140px"><span>measurements</span></div><div class="td dt" style="left:420px;width:160px"><span>2022-08-06T00:00:00.0...</span></div><div class="td dt" style="left:580px;width:160px"><span>2022-08-07T00:00:00.0...</span></div><div class="td dt" style="left:740px;width:160px"><span>2022-08-19T05:35:11.0...</span></div><div class="td shd" style="left:900px;width:100px"><span>numbered</span></div><div class="td spec" style="left:1000px;width:143px"><span>No detail</span></div><div class="td" style="left:1143px;width:60px"><span>0</span></div><div class="td sz" style="left:1203px;width:120px"><span>1.45 MB</span></div><div class="td nr" style="left:1323px;width:120px"><span>359,847</span></div><div class="td" style="left:1443px;width:100px"><span>4</span></div><div class="td" style="left:1543px;width:60px"><span>1</span></div><div class="td" style="left:1603px;width:102px"><span>true</span></div></div><div class="row" style="top:585px"><div class="td sid" style="left:0px;width:280px"><span>measurements_2022-08-05T00:00:00.000Z...</span></div><div class="td dsn" style="left:280px;width:140px"><span>measurements</span></div><div class="td dt" style="left:420px;width:160px"><span>2022-08-05T00:00:00.0...</span></div><div class="td dt" style="left:580px;width:160px"><span>2022-08-06T00:00:00.0...</span></div><div class="td dt" style="left:740px;width:160px"><span>2022-08-19T05:35:10.9...</span></div><div class="td shd" style="left:900px;width:100px"><span>numbered</span></div><div class="td spec" style="left:1000px;width:143px"><span>No detail</span></div><div class="td" style="left:1143px;width:60px"><span>0</span></div><div class="td sz" style="left:1203px;width:120px"><span>1.46 MB</span></div><div class="td nr" style="left:1323px;width:120px"><span>352,297</span></div><div class="td" style="left:1443px;width:100px"><span>4</span></div><div class="td" style="left:1543px;width:60px"><span>1</span></div><div class="td" style="left:1603px;width:102px"><span>true</span></div></div><div class="row odd" style="top:624px"><div class="td sid" style="left:0px;width:280px"><span>measurements_2022-08-04T00:00:00.000Z...</span></div><div class="td dsn" style="left:280px;width:140px"><span>measurements</span></div><div class="td dt" style="left:420px;width:160px"><span>2022-08-04T00:00:00.0...</span></div><div class="td dt" style="left:580px;width:160px"><span>2022-08-05T00:00:00.0...</span></div><div class="td dt" style="left:740px;width:160px"><span>2022-08-19T05:35:10.8...</span></div><div class="td shd" style="left:900px;width:100px"><span>numbered</span></div><div class="td spec" style="left:1000px;width:143px"><span>No detail</span></div><div class="td" style="left:1143px;width:60px"><span>0</span></div><div class="td sz" style="left:1203px;width:120px"><span>1.45 MB</span></div><div class="td nr" style="left:1323px;width:120px"><span>351,000</span></div><div class="td" style="left:1443px;width:100px"><span>4</span></div><div class="td" style="left:1543px;width:60px"><span>1</span></div><div class="td" style="left:1603px;width:102px"><span>true</span></div></div></div><div class="hscroll"></div></div>
<svg class="ico" style="left:25px;top:976px" width="10" height="12" viewBox="0 0 10 12"><path d="M7.5 1.5L3 6L7.5 10.5" fill="none" stroke="#a7abc0" stroke-width="2"/></svg>
<svg class="ico" style="left:56px;top:976px" width="10" height="12" viewBox="0 0 10 12"><path d="M2.5 1.5L7 6L2.5 10.5" fill="none" stroke="#a7abc0" stroke-width="2"/></svg>
<div class="foot" style="left:90px">Showing 1-33</div>

</body></html>
